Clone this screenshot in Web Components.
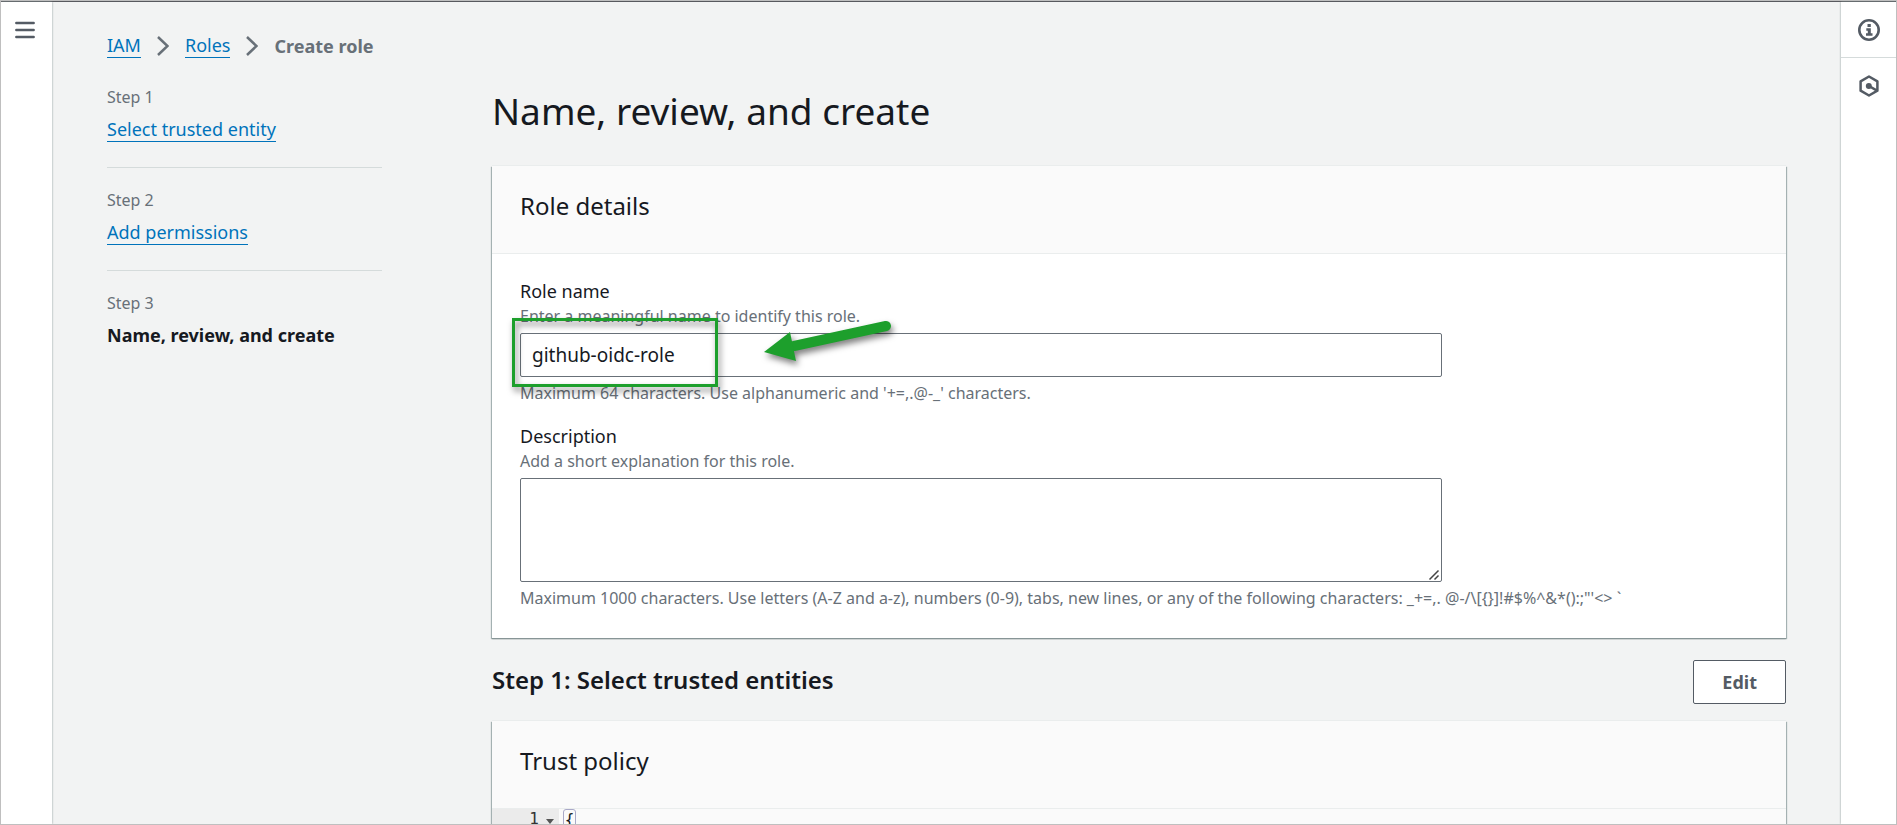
<!DOCTYPE html>
<html lang="en">
<head>
<meta charset="utf-8">
<title>Create role | IAM</title>
<style>
  html, body { margin: 0; height: 100%; }
  body {
    font-family: "Noto Sans", "Open Sans", sans-serif;
    font-size: 18px;
    line-height: 24px;
    color: #16191f;
    background: #f2f3f3;
    --secondary: #687078;
    --link: #0073bb;
    --icon: #545b64;
    --divider: #d5dbdb;
  }
</style>
</head>
<body>
<console-app></console-app>

<template id="console-app">
  <style>
    :host {
      display: flex; height: 100vh; box-sizing: border-box; overflow: hidden;
      border: 1px solid #bfbfbf;
    }
    .frame { display: flex; flex: 1; min-width: 0; border-top: 1px solid #58595e; }
    nav, aside { flex: none; background: #fff; box-shadow: 0 0 2px #879596; z-index: 1; }
    nav { width: 51px; }
    aside { width: 55px; }
    button {
      display: flex; align-items: center; justify-content: center;
      width: 100%; height: 55px; margin: 0; padding: 0; border: 0; background: none; color: var(--icon);
    }
    nav button { padding-right: 3px; }
    aside button:first-child { border-bottom: 1px solid var(--divider); height: 56px; }
    main {
      flex: 1; min-width: 0; overflow-y: auto; scrollbar-width: none;
      padding: 31px 55px 0; box-sizing: border-box;
    }
    .columns { display: grid; grid-template-columns: 275px minmax(0, 1fr); gap: 110px; margin-top: 29px; }
    h1 { margin: 0 0 31px; font-weight: 400; font-size: 37px; line-height: 48px; }
    .section { display: flex; justify-content: space-between; align-items: flex-start; margin: 22px 0 17px; }
    h2 { margin: 0; font-size: 24px; font-weight: 600; line-height: 40px; }
    .edit {
      width: auto; height: 44px; padding: 0 28px; border: 1px solid var(--icon); border-radius: 2px;
      background: #fff; font: 700 18px/24px "Noto Sans", sans-serif;
    }
  </style>
  <div class="frame">
    <nav aria-label="Service">
      <button aria-label="Open navigation">
        <svg width="20" height="18" viewBox="0 0 20 18" fill="none" stroke="currentColor" stroke-width="2.400" stroke-linecap="round"><path d="M1.300 2h17.400M1.300 9h17.400M1.300 16h17.400"/></svg>
      </button>
    </nav>
    <main>
      <bread-crumbs></bread-crumbs>
      <div class="columns">
        <wizard-steps></wizard-steps>
        <div>
          <h1>Name, review, and create</h1>
          <info-card>
            <span slot="title">Role details</span>
            <role-form></role-form>
          </info-card>
          <div class="section">
            <h2>Step 1: Select trusted entities</h2>
            <button class="edit">Edit</button>
          </div>
          <info-card>
            <span slot="title">Trust policy</span>
            <code-view></code-view>
          </info-card>
        </div>
      </div>
    </main>
    <aside aria-label="Tools">
      <button aria-label="Info">
        <svg width="22" height="22" viewBox="0 0 22 22"><circle cx="11" cy="11" r="9.7" fill="none" stroke="currentColor" stroke-width="2.6"/><path fill="currentColor" d="M9.5 5h3.3v3H9.500zM8.300 9.300h4.500v5h1.700v2.500H8v-2.500h1.800v-2.500H8.300z"/></svg>
      </button>
      <button aria-label="Diagnostics">
        <svg width="20" height="22" viewBox="0 0 20 22" fill="none" stroke="currentColor"><path stroke-width="2.500" stroke-linejoin="round" d="M10 1.500l8.400 4.800v9.400L10 20.500l-8.400-4.800V6.300z"/><circle cx="9.800" cy="11" r="3" fill="currentColor" stroke="none"/><path stroke-width="2.500" d="M10 11l8 4.700"/></svg>
      </button>
    </aside>
  </div>
</template>

<template id="bread-crumbs">
  <style>
    :host { display: block; }
    ol { display: flex; align-items: center; gap: 16px; margin: 0; padding: 0; list-style: none; color: var(--secondary); }
    li { display: flex; align-items: center; gap: 16px; }
    a { color: var(--link); text-decoration: none; border-bottom: 1px solid; }
    svg { display: block; }
    strong { font-weight: 700; }
  </style>
  <ol>
    <li><a href="#iam">IAM</a><svg width="12" height="20" viewBox="0 0 12 20" fill="none" stroke="currentColor" stroke-width="2.500"><path d="M1 1l9.500 9L1 19"/></svg></li>
    <li><a href="#roles">Roles</a><svg width="12" height="20" viewBox="0 0 12 20" fill="none" stroke="currentColor" stroke-width="2.500"><path d="M1 1l9.500 9L1 19"/></svg></li>
    <li><strong>Create role</strong></li>
  </ol>
</template>

<template id="wizard-steps">
  <style>
    :host { display: block; }
    ol { margin: 0; padding: 0; list-style: none; }
    li { padding-bottom: 26px; margin-bottom: 22px; border-bottom: 1px solid var(--divider); }
    li:last-child { border: 0; margin: 0; }
    small { display: block; margin-bottom: 10px; font-size: 16px; line-height: 20px; color: var(--secondary); }
    div { height: 24px; }
    a { color: var(--link); text-decoration: none; border-bottom: 1px solid; }
    strong { font-weight: 700; }
  </style>
  <ol>
    <li><small>Step 1</small><div><a href="#step1">Select trusted entity</a></div></li>
    <li><small>Step 2</small><div><a href="#step2">Add permissions</a></div></li>
    <li><small>Step 3</small><div><strong>Name, review, and create</strong></div></li>
  </ol>
</template>

<template id="info-card">
  <style>
    :host { display: block; background: #fff; box-shadow: 0 1px 1px #879596, 1px 1px 1px #aab7b8, -1px 1px 1px #aab7b8, 0 -1px 0 #eaeded; }
    header { padding: 25px 28px 32px; background: #fafafa; border-bottom: 1px solid #eaeded; }
    h3 { margin: 0; font-size: 24px; line-height: 30px; font-weight: 400; }
  </style>
  <header><h3><slot name="title"></slot></h3></header>
  <slot></slot>
</template>

<template id="role-form">
  <style>
    :host { display: flex; flex-direction: column; gap: 21px; padding: 25px 28px 30px; }
    label { display: block; }
    p { margin: 0; font-size: 16px; line-height: 20px; color: var(--secondary); }
    .hint { margin: 3px 0 7px; }
    .limit { margin-top: 6px; }
    .control { position: relative; max-width: 922px; }
    input, textarea {
      display: block; width: 100%; box-sizing: border-box; margin: 0; padding: 0 11px;
      border: 1px solid var(--secondary); border-radius: 2px; background: #fff; color: #16191f;
      font: 19px/24px "Noto Sans", sans-serif;
    }
    input { height: 44px; }
    textarea { height: 104px; resize: vertical; }
    textarea::-webkit-resizer {
      background: url("data:image/svg+xml,%3Csvg xmlns='http://www.w3.org/2000/svg' width='15' height='15'%3E%3Cpath d='M3.500 13.500l9-9M8.500 13.500l4-4' stroke='%23444' stroke-width='1.500' fill='none'/%3E%3C/svg%3E") no-repeat right bottom;
    }
    mark-up { position: absolute; left: -8px; top: -15px; }
  </style>
  <div>
    <label for="name">Role name</label>
    <p class="hint" id="name-hint">Enter a meaningful name to identify this role.</p>
    <div class="control">
      <input id="name" type="text" value="github-oidc-role" aria-describedby="name-hint">
      <mark-up></mark-up>
    </div>
    <p class="limit">Maximum 64 characters. Use alphanumeric and '+=,.@-_' characters.</p>
  </div>
  <div>
    <label for="description">Description</label>
    <p class="hint" id="description-hint">Add a short explanation for this role.</p>
    <div class="control"><textarea id="description" aria-describedby="description-hint"></textarea></div>
    <p class="limit">Maximum 1000 characters. Use letters (A-Z and a-z), numbers (0-9), tabs, new lines, or any of the following characters: _+=,. @-/\[{}]!#$%^&amp;*():;"'&lt;&gt; `</p>
  </div>
</template>

<template id="mark-up">
  <style>
    :host { display: block; pointer-events: none; }
    svg { display: block; filter: drop-shadow(2px 4px 3px rgba(0, 0, 0, .5)); overflow: visible; }
  </style>
  <svg width="382" height="70" viewBox="0 0 382 70" aria-hidden="true">
    <rect x="1.500" y="1.500" width="203" height="66" fill="none" stroke="#1d9f2c" stroke-width="3"/>
    <path d="M282 28L374 8" fill="none" stroke="#1d9f2c" stroke-width="10" stroke-linecap="round"/>
    <path d="M252 34L278 14L284 43z" fill="#1d9f2c"/>
  </svg>
</template>

<template id="code-view">
  <style>
    :host { display: flex; background: #fafafa; font: 16px/20px "DejaVu Sans Mono", monospace; height: 100px; }
    .gutter { display: flex; align-items: flex-start; justify-content: flex-end; gap: 7px; width: 67px; padding-right: 5px; box-sizing: border-box; background: #ebebeb; color: #333; }
    svg { margin-top: 10px; }
    code { font: inherit; margin-left: 4px; height: 20px; width: 13px; box-sizing: border-box; border: 1px solid #a9a9c8; border-radius: 3px; text-align: center; }
  </style>
  <div class="gutter"><span>1</span><svg width="8" height="5" viewBox="0 0 8 5"><path d="M0 0h8L4 5z" fill="#555"/></svg></div>
  <code>{</code>
</template>

<script>
  for (const name of ['info-card', 'mark-up', 'role-form', 'code-view', 'bread-crumbs', 'wizard-steps', 'console-app']) {
    customElements.define(name, class extends HTMLElement {
      constructor() {
        super();
        this.attachShadow({ mode: 'open' })
          .append(document.getElementById(name).content.cloneNode(true));
      }
    });
  }
</script>
</body>
</html>
